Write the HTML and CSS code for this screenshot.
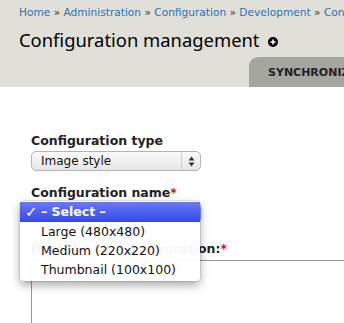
FILE: index.html
```html
<!DOCTYPE html>
<html>
<head>
<meta charset="utf-8">
<link rel="stylesheet" href="styles.css">
</head>
<body>
<header class="header">
  <nav class="breadcrumb"><a href="#">Home</a> » <a href="#">Administration</a> » <a href="#">Configuration</a> » <a href="#">Development</a> » <a href="#">Configuration management</a></nav>
  <h1 class="title">Configuration management <span class="plus"><svg width="10" height="10" viewBox="0 0 10 10"><circle cx="5" cy="5" r="5" fill="#000"/><path d="M5 2.4v5.2M2.4 5h5.2" stroke="#fff" stroke-width="1.6"/></svg></span></h1>
  <div class="tabs"><span class="tab">Synchronize</span></div>
</header>
<main class="content">
  <div class="field">
    <label class="label">Configuration type</label>
    <div class="select"><span class="select-text">Image style</span><span class="select-arrows"><svg width="7" height="11" viewBox="0 0 7 11"><path d="M3.5 0.5L6.5 4.5H0.5Z M3.5 10.5L6.5 6.5H0.5Z" fill="#333"/></svg></span></div>
  </div>
  <div class="field field-name">
    <label class="label">Configuration name<span class="req">*</span></label>
    <div class="select select-focus"><span class="select-text">- Select -</span></div>
    <ul class="menu">
      <li class="menu-item active"><span class="check">✓</span>– Select –</li>
      <li class="menu-item">Large (480x480)</li>
      <li class="menu-item">Medium (220x220)</li>
      <li class="menu-item">Thumbnail (100x100)</li>
    </ul>
  </div>
  <div class="field field-text">
    <label class="label">Here is your configuration:<span class="req">*</span></label>
    <div class="textarea"></div>
  </div>
</main>
</body>
</html>
```
FILE: styles.css
```css
html, body {
  margin: 0;
  padding: 0;
  background: #fff;
  font-family: "DejaVu Sans", Verdana, sans-serif;
  color: #222;
  overflow: hidden;
}
.header {
  background: #e0e0d8;
  height: 87px;
  padding: 6px 0 0 19px;
  box-sizing: border-box;
  white-space: nowrap;
  overflow: hidden;
}
.breadcrumb {
  font-size: 10.6px;
  line-height: 13px;
  color: #333;
}
.breadcrumb a {
  color: #2a72b5;
  text-decoration: none;
}
.title {
  margin: 10px 0 0;
  font-family: "Noto Sans", sans-serif;
  font-weight: normal;
  font-size: 18.4px;
  line-height: 22px;
  color: #000;
  display: flex;
  align-items: center;
}
.plus {
  display: inline-flex;
  margin-left: 8px;
  margin-top: 3px;
}
.tabs {
  margin: 6px 0 0 230px;
  display: flex;
}
.tab {
  display: block;
  background: #a6a6a0;
  border-radius: 9px 0 0 0;
  height: 30px;
  line-height: 32px;
  padding: 0 0 0 19px;
  width: 200px;
  text-transform: uppercase;
  font-weight: bold;
  font-size: 11px;
  color: #222;
}
.content {
  padding: 46px 0 0 31px;
}
.field {
  position: relative;
  margin-bottom: 14px;
}
.field-name {
  margin-bottom: 18px;
}
.label {
  display: block;
  font-weight: bold;
  font-size: 12.5px;
  line-height: 16px;
  color: #222;
  margin-bottom: 2px;
}
.req {
  color: #e00;
}
.select {
  width: 170px;
  height: 20px;
  box-sizing: border-box;
  border: 1px solid #b4b4b4;
  border-radius: 5px;
  background: linear-gradient(#fbfbfb, #e6e6e6);
  display: flex;
  align-items: center;
  font-size: 12px;
  color: #111;
  position: relative;
}
.select-text {
  padding-left: 9px;
  flex: 1;
}
.select-arrows {
  width: 18px;
  height: 18px;
  border-left: 1px solid #d0d0d0;
  display: flex;
  align-items: center;
  justify-content: center;
}
.select-focus {
  border-color: #7aa7e0;
  box-shadow: 0 0 2px #7aa7e0;
}
.menu {
  position: absolute;
  left: -11px;
  top: 16px;
  width: 180px;
  margin: 0;
  padding: 1px 0 2px;
  list-style: none;
  background: rgba(255, 255, 255, 0.96);
  border-radius: 4px;
  box-shadow: 0 4px 10px rgba(0, 0, 0, 0.35), 0 0 0 1px rgba(0, 0, 0, 0.08);
  font-size: 12.5px;
  z-index: 2;
}
.menu-item {
  height: 19px;
  line-height: 19px;
  padding-left: 21px;
  color: #111;
  position: relative;
}
.menu-item.active {
  height: 20px;
  line-height: 20px;
  background: linear-gradient(#6a78f6, #3449ea);
  color: #fff;
  font-weight: bold;
}
.check {
  position: absolute;
  left: 5px;
  font-size: 15px;
  font-weight: bold;
}
.textarea {
  height: 64px;
  border-top: 1px solid #999;
  border-left: 1px solid #999;
  margin-top: 3px;
}
```
